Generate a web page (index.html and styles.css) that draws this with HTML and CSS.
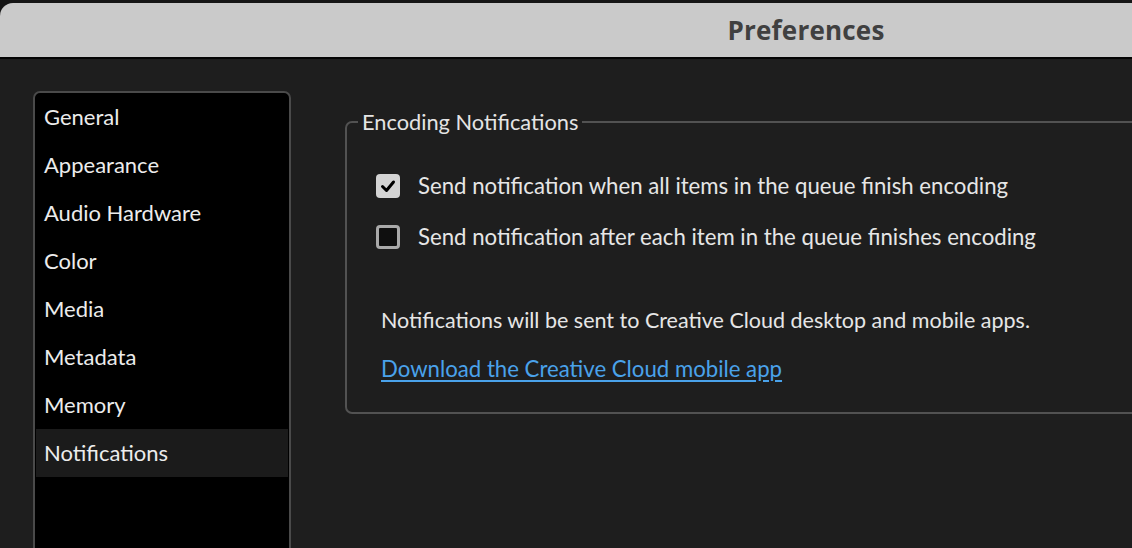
FILE: index.html
```html
<!DOCTYPE html>
<html>
<head>
<meta charset="utf-8">
<link rel="stylesheet" href="styles.css">
</head>
<body>
<div class="screen">
  <div class="window">
    <div class="titlebar"><span class="title">Preferences</span></div>
    <div class="content">
      <nav class="sidebar">
        <div class="item">General</div>
        <div class="item">Appearance</div>
        <div class="item">Audio Hardware</div>
        <div class="item">Color</div>
        <div class="item">Media</div>
        <div class="item">Metadata</div>
        <div class="item">Memory</div>
        <div class="item selected">Notifications</div>
      </nav>
      <main class="main">
        <fieldset class="group">
          <legend class="legend">Encoding Notifications</legend>
          <div class="group-body">
            <div class="row">
              <span class="box checked"><svg viewBox="0 0 24 24" width="24" height="24"><path d="M6.5 12.5 L10.5 16.5 L17.5 8" fill="none" stroke="#000" stroke-width="3" stroke-linecap="round" stroke-linejoin="round"/></svg></span>
              <span class="label">Send notification when all items in the queue finish encoding</span>
            </div>
            <div class="row second">
              <span class="box"></span>
              <span class="label">Send notification after each item in the queue finishes encoding</span>
            </div>
            <p class="note">Notifications will be sent to Creative Cloud desktop and mobile apps.</p>
            <a class="link" href="#">Download the Creative Cloud mobile app</a>
          </div>
        </fieldset>
      </main>
    </div>
  </div>
</div>
</body>
</html>
```
FILE: styles.css
```css
html, body {
  margin: 0;
  padding: 0;
  background: #151515;
  overflow: hidden;
}
.screen {
  width: 1132px;
  height: 548px;
  overflow: hidden;
  padding-top: 3px;
  box-sizing: border-box;
  font-family: "Lato", "Noto Sans", sans-serif;
}
.window {
  width: 1612px;
  height: 560px;
  background: #1e1e1e;
  border-top-left-radius: 13px;
  overflow: hidden;
}
.titlebar {
  height: 54px;
  background: #cacaca;
  border-bottom: 2px solid #050505;
  display: flex;
  align-items: center;
  justify-content: center;
}
.title {
  font-family: "Open Sans", "Noto Sans", sans-serif;
  font-weight: 700;
  font-size: 26px;
  color: #404040;
  letter-spacing: 0.2px;
}
.content {
  display: flex;
  align-items: flex-start;
  padding-left: 33px;
  padding-top: 32px;
}
.sidebar {
  width: 258px;
  height: 520px;
  box-sizing: border-box;
  background: #000;
  border: 2px solid #4a4a4a;
  border-radius: 7px;
  padding: 0 1px;
  flex: none;
}
.item {
  height: 48px;
  line-height: 48px;
  padding-left: 8px;
  color: #ececec;
  font-size: 22px;
}
.item.selected {
  background: #1b1b1b;
}
.main {
  margin-left: 54px;
  margin-top: 17px;
  flex: none;
}
.group {
  width: 900px;
  margin: 0;
  border: 2px solid #525252;
  border-radius: 7px;
  padding: 0 0 29px 0;
}
.legend {
  margin-left: 11px;
  padding: 0 4px;
  font-size: 21.8px;
  line-height: 28px;
  color: #e4e4e4;
}
.group-body {
  padding: 38px 0 0 29px;
}
.row {
  display: flex;
  align-items: center;
  height: 24px;
  gap: 18px;
}
.row.second {
  margin-top: 27px;
}
.box {
  width: 24px;
  height: 24px;
  box-sizing: border-box;
  border-radius: 4px;
  background: #0f0f0f;
  border: 3px solid #a9a9a9;
  flex: none;
}
.box.checked {
  background: #d4d4d4;
  border: none;
}
.box svg {
  display: block;
}
.label {
  font-size: 22.2px;
  color: #e6e6e6;
  line-height: 24px;
  white-space: nowrap;
}
.note {
  margin: 57px 0 0 5px;
  font-size: 21.5px;
  line-height: 28px;
  color: #e6e6e6;
}
.link {
  display: inline-block;
  margin: 21px 0 0 5px;
  font-size: 22.2px;
  line-height: 28px;
  color: #4aa2ea;
  text-decoration: underline;
  text-underline-offset: 3px;
}
```
